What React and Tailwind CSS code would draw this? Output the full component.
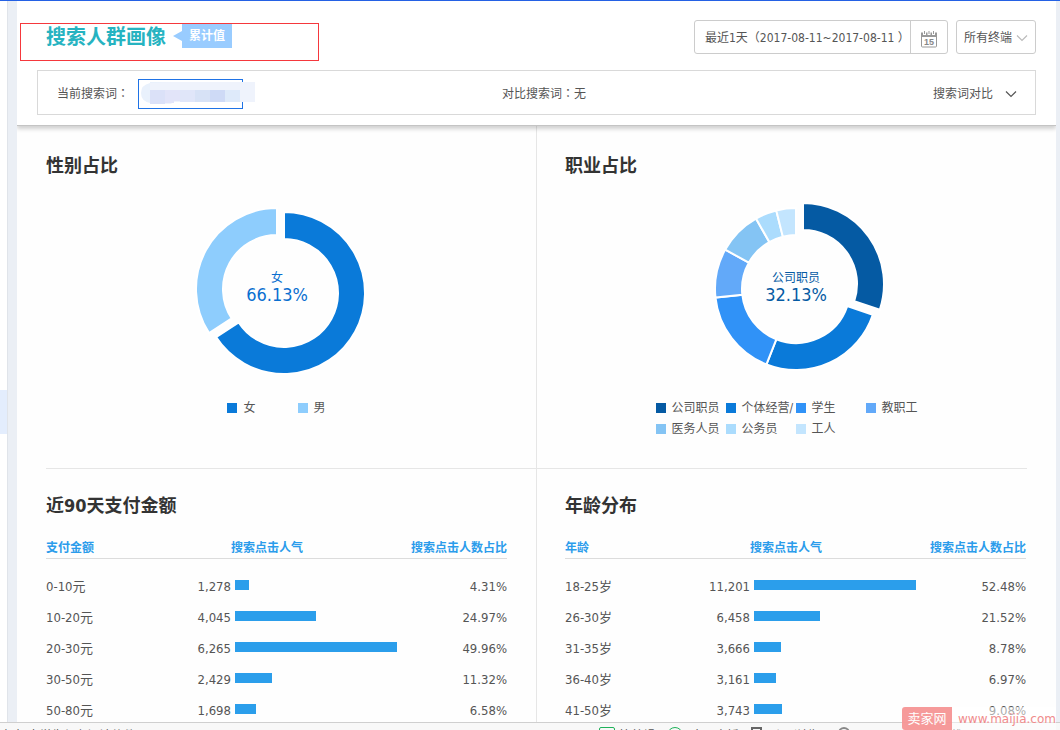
import React from "react";
import { ChevronDown } from "lucide-react";

const genderSlices = [
  { name: "女", from: 0, to: 237, color: "#0a7ad9", dx: 7, dy: 4 },
  { name: "男", from: 237, to: 360, color: "#8ecdfd" },
];

const jobSlices = [
  { name: "公司职员", from: 0, to: 108.5, color: "#055aa3", dx: 7, dy: -5 },
  { name: "个体经营/", from: 108.5, to: 201.4, color: "#0a7ad9" },
  { name: "学生", from: 201.4, to: 263.9, color: "#3092f7" },
  { name: "教职工", from: 263.9, to: 299.1, color: "#62a9f9" },
  { name: "医务人员", from: 299.1, to: 330.4, color: "#84c4f4" },
  { name: "公务员", from: 330.4, to: 345.9, color: "#abdcfd" },
  { name: "工人", from: 345.9, to: 360, color: "#c3e5fe" },
];

const payRows = [
  { label: "0-10元", value: "1,278", percent: 4.31 },
  { label: "10-20元", value: "4,045", percent: 24.97 },
  { label: "20-30元", value: "6,265", percent: 49.96 },
  { label: "30-50元", value: "2,429", percent: 11.32 },
  { label: "50-80元", value: "1,698", percent: 6.58 },
];

const ageRows = [
  { label: "18-25岁", value: "11,201", percent: 52.48 },
  { label: "26-30岁", value: "6,458", percent: 21.52 },
  { label: "31-35岁", value: "3,666", percent: 8.78 },
  { label: "36-40岁", value: "3,161", percent: 6.97 },
  { label: "41-50岁", value: "3,743", percent: 9.08 },
];

// ring segment around 0,0 - angles are clockwise from the top
const arcPath = (from, to, outer = 81, inner = 54) => {
  const point = (deg, r) => {
    const rad = (deg * Math.PI) / 180;
    return `${(Math.sin(rad) * r).toFixed(2)} ${(-Math.cos(rad) * r).toFixed(2)}`;
  };
  const large = to - from > 180 ? 1 : 0;
  return `M${point(from, outer)} A${outer} ${outer} 0 ${large} 1 ${point(to, outer)} L${point(to, inner)} A${inner} ${inner} 0 ${large} 0 ${point(from, inner)}Z`;
};

const Donut = ({ slices, label, value, textClass }) => (
  <svg viewBox="-90 -90 180 180" className="mx-auto block h-[180px] w-[180px]" role="img" aria-label={`${label} ${value}`}>
    {slices.map((s) => (
      <path
        key={s.name}
        d={arcPath(s.from, s.to)}
        transform={`translate(${s.dx || 0} ${s.dy || 0})`}
        fill={s.color}
        stroke="#fff"
        strokeWidth="2"
      />
    ))}
    <text y="-7" textAnchor="middle" className={`text-[12px] ${textClass}`}>{label}</text>
    <text y="12" textAnchor="middle" className={`text-[18px] ${textClass}`}>{value}</text>
  </svg>
);

const Legend = ({ slices, className }) => (
  <ul className={className}>
    {slices.map((s) => (
      <li key={s.name} className="flex h-[21px] items-center gap-[6px] whitespace-nowrap">
        <span className="h-[10px] w-[10px] shrink-0" style={{ backgroundColor: s.color }} />
        <span>{s.name}</span>
      </li>
    ))}
  </ul>
);

const BarTable = ({ firstColumn, rows }) => {
  const max = Math.max(...rows.map((r) => r.percent));
  return (
    <table className="mt-5 w-full table-fixed border-collapse">
      <colgroup>
        <col className="w-[130px]" />
        <col className="w-[55px]" />
        <col />
        <col className="w-[100px]" />
      </colgroup>
      <thead>
        <tr className="h-5 border-b border-[#dcdcdc] text-[#2b9ceb]">
          <th colSpan={2} className="p-0 text-left font-bold">{firstColumn}</th>
          <th className="p-0 text-left font-bold">搜索点击人气</th>
          <th className="p-0 text-right font-bold whitespace-nowrap">搜索点击人数占比</th>
        </tr>
      </thead>
      <tbody className="text-[13px] before:block before:h-[13px]">
        {rows.map((row) => (
          <tr key={row.label} className="h-[31px]">
            <td className="p-0">{row.label}</td>
            <td className="p-0 text-right">{row.value}</td>
            <td className="p-0 pb-1 pl-1">
              <div className="w-[162px]">
                <div className="h-[10px] bg-[#2b9eeb]" style={{ width: `${(row.percent / max) * 100}%` }} />
              </div>
            </td>
            <td className="p-0 text-right">{row.percent.toFixed(2)}%</td>
          </tr>
        ))}
      </tbody>
    </table>
  );
};

const PanelTitle = ({ children }) => (
  <h2 className="text-[18px] leading-6 font-bold text-[#333]">{children}</h2>
);

const Colon = () => <span className="font-['Noto_Sans_CJK_TC',sans-serif]">：</span>;

const CalendarIcon = () => (
  <svg width="16" height="17" viewBox="0 0 16 17" fill="none">
    <path d="M.5 4V15a1 1 0 0 0 1 1h13a1 1 0 0 0 1-1V4" stroke="#999" />
    <path d="M0 1.5h16V6H0z" fill="#999" />
    <path d="M3.5 0v4M8 0v4M12.5 0v4" stroke="#fff" strokeWidth="3" />
    <path d="M3.5 0v3M8 0v3M12.5 0v3" stroke="#999" />
    <text x="8" y="14" textAnchor="middle" className="fill-[#888] font-['Liberation_Sans',sans-serif] text-[9px] font-bold">15</text>
  </svg>
);

const Chevron = ({ className }) => (
  <svg width="12" height="8" viewBox="0 0 12 8" fill="none" stroke="currentColor" className={className} aria-hidden="true">
    <path d="M1 1.5l5 5 5-5" strokeWidth="1.2" />
  </svg>
);

// pixelated cover over the keyword
const KeywordMask = () => (
  <svg width="114" height="22" viewBox="0 0 114 22" className="pointer-events-none absolute top-[3px] left-[3px]" aria-hidden="true">
    <path d="M9 1Q0 3 0 11t9 10h23V0H9z" fill="#e9f1fc" />
    <path d="M9 1L31 0H114V20H32l-2 2H9z" fill="#eff3fc" />
    <path d="M9 8h15v14H9z" fill="#dbe1f8" />
    <path d="M24 8h15v11H33v2h-9z" fill="#e2e4f9" />
    <path d="M39 8h15v12H39z" fill="#e0e6f9" />
    <path d="M54 8h15v12H54z" fill="#d7e2f6" />
    <path d="M69 8h15v12H69z" fill="#cedaf6" />
    <path d="M84 8h15v12H84z" fill="#deeafa" />
  </svg>
);

const Header = () => (
  <header className="relative border-b border-[#c4c4c4] bg-white pt-[19px] pr-5 pb-[10px] pl-[3px] shadow-[0_3px_4px_rgba(0,0,0,0.18)]">
    <div className="flex items-start justify-between">
      <div className="mt-[3px] flex h-[38px] w-[299px] items-start border border-[#f5383d] pl-[25px]">
        <h1 className="text-[20px] leading-[26px] font-bold text-[#26b3c1]">搜索人群画像</h1>
        <div className="ml-[7px] flex items-center">
          <span className="border-y-[5px] border-r-[9px] border-y-transparent border-r-[#99ccff]" />
          <span className="h-6 bg-[#99ccff] px-[7px] leading-6 font-bold text-white">累计值</span>
        </div>
      </div>
      <div className="flex gap-2">
        <div className="flex h-[34px] rounded-[3px] border border-[#ccc]">
          <input
            type="text"
            readOnly
            aria-label="日期范围"
            value="最近1天（2017-08-11~2017-08-11 ）"
            className="w-[215px] pt-[2px] pl-[10px] outline-none"
          />
          <button type="button" aria-label="选择日期" className="flex w-[37px] items-center justify-center border-l border-[#ccc] pt-1">
            <CalendarIcon />
          </button>
        </div>
        <div className="relative">
          <select aria-label="终端" className="h-[34px] w-20 appearance-none rounded-[3px] border border-[#ccc] bg-white pt-[2px] pl-[7px]">
            <option>所有终端</option>
          </select>
          <Chevron className="pointer-events-none absolute top-[14px] right-2 text-[#bbb]" />
        </div>
      </div>
    </div>

    <div className="mt-[9px] ml-[17px] flex h-[45px] items-center justify-between border border-[#d9d9d9] pt-[2px] pr-[18px] pl-[19px]">
      <div className="flex flex-1 items-center">
        <label htmlFor="keyword">当前搜索词<Colon /></label>
        <div className="relative ml-[9px] h-[30px]">
          <input id="keyword" type="text" className="h-[30px] w-[105px] border border-[#1f73e6] px-2 outline-none" />
          <KeywordMask />
        </div>
      </div>
      <p className="pl-[14px]">对比搜索词<Colon />无</p>
      <div className="flex flex-1 justify-end">
        <button type="button" className="flex items-center gap-3">
          搜索词对比
          <Chevron className="text-[#555]" />
        </button>
      </div>
    </div>
  </header>
);

const BottomBar = () => (
  <footer className="flex h-2 shrink-0 items-start justify-between overflow-hidden border-t border-[#cfcfcf] bg-[#f8f8f8] pt-1 text-[#555]">
    <span>点击 大学生保存阅读软件</span>
    <div className="flex gap-3 pr-[10px] whitespace-nowrap">
      <a href="#clip" className="flex items-start gap-1">
        <span className="h-4 w-4 shrink-0 rounded-[2px] border border-[#1fb25a]" />
        快剪辑
      </a>
      <a href="#live" className="flex items-start gap-2">
        <span className="h-4 w-4 shrink-0 rounded-full border border-[#1fb25a]" />
        今日直播
      </a>
      <a href="#screen" className="flex items-start gap-2">
        <span className="h-4 w-[11px] shrink-0 border-2 border-[#666]" />
        跨屏浏览
      </a>
      <a href="#speed" aria-label="加速" className="ml-2">
        <span className="block h-4 w-3 rounded-full border-2 border-[#888]" />
      </a>
      <a href="#download" className="flex items-start gap-2 pr-[88px] pl-[56px]">
        <ChevronDown className="h-3 w-3 text-[#777]" />
        下载
      </a>
    </div>
  </footer>
);

const App = () => (
  <div className="relative flex h-screen flex-col overflow-hidden border-t border-[#2461e4] bg-white font-['DejaVu_Sans_Condensed','Noto_Sans','Noto_Sans_CJK_SC',sans-serif] text-[12px] leading-[18px] text-[#555]">
    <div className="flex min-h-0 flex-1 bg-[#ebeff5]">
      <aside className="w-2 shrink-0 border-r border-[#e0e4ea] bg-white pt-[389px]">
        <div className="h-11 bg-[#e3edfd]" />
      </aside>
      <main className="mr-1 ml-[9px] flex-1 overflow-hidden bg-[#fefefe]">
        <Header />
        <div className="grid grid-cols-2 pr-px">
          <section className="pt-7 pr-[29px] pb-[29px] pl-[29px]">
            <PanelTitle>性别占比</PanelTitle>
            <div className="mt-[21px]">
              <Donut slices={genderSlices} label="女" value="66.13%" textClass="fill-[#0a6fd0]" />
            </div>
            <Legend slices={genderSlices} className="mt-[18px] flex justify-center gap-[42px]" />
          </section>
          <section className="border-l border-[#e6e6e6] pt-7 pr-[29px] pb-[29px] pl-7">
            <PanelTitle>职业占比</PanelTitle>
            <div className="mt-[21px]">
              <Donut slices={jobSlices} label="公司职员" value="32.13%" textClass="fill-[#055aa3]" />
            </div>
            <Legend slices={jobSlices} className="mt-[18px] grid grid-cols-[repeat(4,70px)] justify-center" />
          </section>
        </div>
        <div className="mx-[29px] h-px bg-[#e6e6e6]" />
        <div className="grid grid-cols-2 pr-px">
          <section className="px-[29px] pt-[25px] pb-3">
            <PanelTitle>近90天支付金额</PanelTitle>
            <BarTable firstColumn="支付金额" rows={payRows} />
          </section>
          <section className="border-l border-[#e6e6e6] pt-[25px] pr-[29px] pb-3 pl-7">
            <PanelTitle>年龄分布</PanelTitle>
            <BarTable firstColumn="年龄" rows={ageRows} />
          </section>
        </div>
      </main>
    </div>
    <BottomBar />
    <div className="absolute right-1 bottom-0 flex h-[23px] items-center bg-white/50">
      <span className="h-full w-[50px] rounded-l-[3px] bg-[#f58f8f]/90 text-center text-[13px] leading-[23px] text-white">卖家网</span>
      <a href="#maijia" className="pl-[6px] text-[12px] text-[#f08c8c] font-['DejaVu_Sans',sans-serif]">www.maijia.com</a>
    </div>
  </div>
);

export default App;
